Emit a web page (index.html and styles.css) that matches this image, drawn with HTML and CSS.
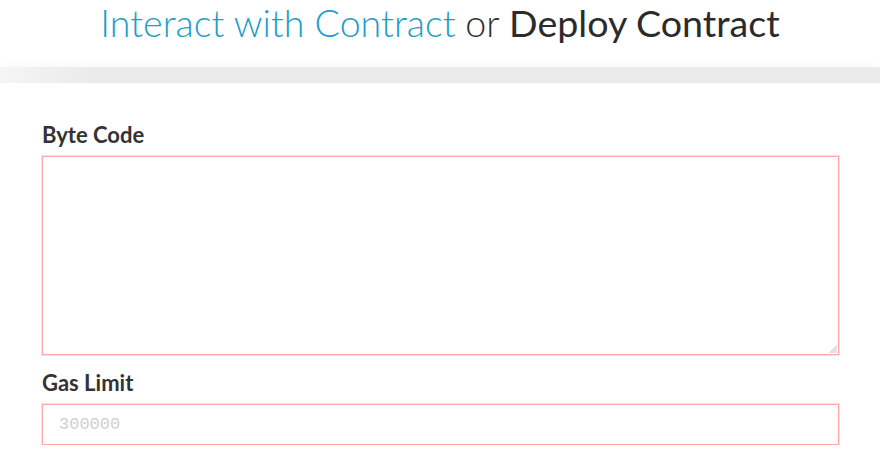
FILE: index.html
```html
<!DOCTYPE html>
<html>
<head>
<meta charset="utf-8">
<link rel="stylesheet" href="styles.css">
</head>
<body>
<header class="title-bar">
  <h1 class="title"><span class="title-link">Interact with Contract</span> <span class="title-or">or</span> <span class="title-active">Deploy Contract</span></h1>
</header>
<div class="band"></div>
<main class="form">
  <label class="field-label" for="bytecode">Byte Code</label>
  <div class="area-wrap">
    <textarea id="bytecode" class="field field-area"></textarea>
  </div>
  <label class="field-label" for="gas">Gas Limit</label>
  <input id="gas" class="field field-input" type="text" placeholder="300000">
</main>
</body>
</html>
```
FILE: styles.css
```css
html, body {
  margin: 0;
  padding: 0;
  background: #fff;
  font-family: Lato, "Open Sans", sans-serif;
  color: #333;
}
.title-bar {
  height: 67px;
  display: flex;
  justify-content: center;
  align-items: flex-start;
}
.title {
  margin: 0;
  font-size: 37.6px;
  line-height: 45px;
  font-weight: 400;
  white-space: nowrap;
}
.title-link {
  color: #1e9dca;
  font-weight: 300;
}
.title-or {
  color: #333;
  font-weight: 300;
}
.title-active {
  color: #2b2b2b;
  font-weight: 400;
}
.band {
  height: 16px;
  background: linear-gradient(to right, #f5f5f5 0, #ebebeb 90px, #ebebeb 100%);
  box-shadow: 0 -6px 10px rgba(0, 0, 0, 0.02);
}
.form {
  padding: 39px 42px 0 42px;
  display: flex;
  flex-direction: column;
}
.field-label {
  font-size: 22px;
  font-weight: 700;
  line-height: 26px;
  color: #333;
  margin-bottom: 8px;
}
.field {
  box-sizing: border-box;
  width: 797px;
  border: 1px solid #ffa8a8;
  box-shadow: 0 0 0 1px #ffdede;
  outline: none;
  background: #fff;
  margin: 0;
}
.area-wrap {
  position: relative;
  width: 797px;
  height: 199px;
  margin-bottom: 15px;
}
.area-wrap::after {
  content: "";
  position: absolute;
  right: 2px;
  bottom: 2px;
  width: 9px;
  height: 9px;
  background: linear-gradient(135deg, transparent 50%, #e2e2e2 50%);
  pointer-events: none;
}
.field-area {
  display: block;
  height: 199px;
  resize: none;
}
.field-input {
  height: 41px;
  padding: 0 16px;
  font-family: "Liberation Mono", monospace;
  font-size: 17px;
}
.field-input::placeholder {
  color: #cfcfcf;
}
```
